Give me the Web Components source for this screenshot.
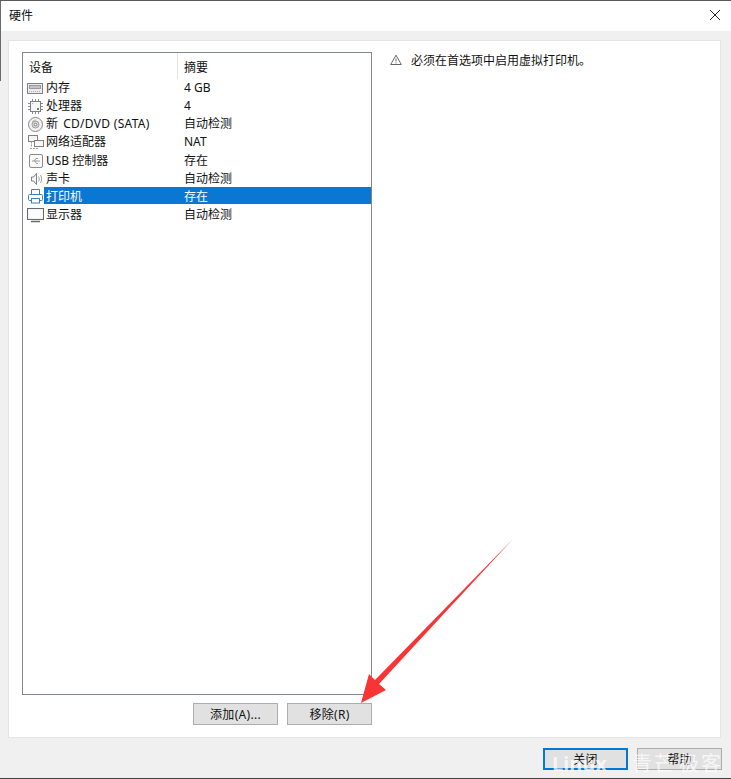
<!DOCTYPE html>
<html lang="zh">
<head>
<meta charset="utf-8">
<title>硬件</title>
<style>
  html, body { margin: 0; padding: 0; background: #f0f0f0; }
  body { font: 12px "Noto Sans", "Noto Sans CJK SC", sans-serif; color: #111; }
</style>
</head>
<body>
<hw-dialog title-text="硬件">
  <device-list slot="list">
    <device-row icon="memory" name="内存" summary="4 GB"></device-row>
    <device-row icon="cpu" name="处理器" summary="4"></device-row>
    <device-row icon="cd" name="新 <b>CD/DVD (SATA)</b>" summary="自动检测"></device-row>
    <device-row icon="net" name="网络适配器" summary="NAT"></device-row>
    <device-row icon="usb" name="USB 控制器" summary="存在"></device-row>
    <device-row icon="sound" name="声卡" summary="自动检测"></device-row>
    <device-row icon="printer" name="打印机" summary="存在" selected></device-row>
    <device-row icon="display" name="显示器" summary="自动检测"></device-row>
  </device-list>
  <win-button slot="list-actions">添加(A)...</win-button>
  <win-button slot="list-actions">移除(R)</win-button>
  <warn-note slot="detail">必须在首选项中启用虚拟打印机。</warn-note>
  <win-button slot="footer" primary>关闭</win-button>
  <win-button slot="footer">帮助</win-button>
</hw-dialog>

<script>
const ICONS = {
  memory: `<rect x="1.500" y="4.500" width="15" height="10" fill="#ececec" stroke="#808080"/><rect x="3.500" y="6.500" width="11" height="3" fill="#c4c4c4" stroke="#9a9a9a"/><path d="M3 12.500h12" stroke="#b0b0b0" stroke-dasharray="1 1"/>`,
  cpu: `<rect x="4.500" y="4.500" width="10" height="10" fill="#f6f6f6" stroke="#808080"/><path d="M6.500 2v2M9.500 2v2M12.500 2v2M6.500 15v2M9.500 15v2M12.500 15v2M2 6.500h2M2 9.500h2M2 12.500h2M15 6.500h2M15 9.500h2M15 12.500h2" stroke="#8c8c8c"/><rect x="11" y="11" width="2" height="2" fill="#777"/><rect x="6" y="6" width="1" height="1" fill="#aaa"/>`,
  cd: `<circle cx="9.500" cy="9.500" r="7" fill="#f2f2f2" stroke="#868686"/><path d="M6 7a4.500 4.500 0 0 1 4-2" stroke="#bbb" fill="none"/><circle cx="9.500" cy="9.500" r="3.500" fill="#d8d8d8" stroke="#a0a0a0"/><circle cx="9.500" cy="9.500" r="1.300" fill="#fff" stroke="#808080"/>`,
  net: `<rect x="2.500" y="2.500" width="9" height="6" fill="#f6f6f6" stroke="#808080"/><rect x="8.500" y="7.500" width="9" height="6" fill="#f6f6f6" stroke="#808080"/><path d="M5.500 8.500v5M4 15.500h9" stroke="#999" stroke-dasharray="2 1" fill="none"/>`,
  usb: `<rect x="3.500" y="2.500" width="13" height="13" rx="1.500" fill="#fafafa" stroke="#8c8c8c"/><path d="M6 9h8M8 9l2-2.500h2M9 9l1.500 2.500H12" stroke="#999" fill="none"/>`,
  sound: `<path d="M5.500 7h2l3-3.500v11L7.500 11h-2z" fill="#f4f4f4" stroke="#808080"/><path d="M12.500 6.500c1 1.500 1 3.500 0 5M14.500 5c1.500 2.500 1.500 5.500 0 8" stroke="#a0a0a0" fill="none"/>`,
  printer: `<path d="M5.500 6V1.500h8V6" fill="#fff" stroke="#3f80b5"/><rect x="2.500" y="6.500" width="14" height="6" rx="1" fill="#fff" stroke="#3f80b5"/><rect x="5.500" y="10.500" width="8" height="4.500" fill="#fff" stroke="#3f80b5"/>`,
  display: `<rect x="1.500" y="2.500" width="16" height="11" fill="#f2f2f2" stroke="#6a6a6a"/><rect x="3" y="4" width="13" height="8" fill="#fbfbfb"/><path d="M5 15.500h9" stroke="#6a6a6a" stroke-width="1.500"/>`
};

class HwDialog extends HTMLElement {
  connectedCallback() {
    this.attachShadow({ mode: "open" });
    this.shadowRoot.innerHTML = `
      <style>
        :host { display: block; position: relative; width: 731px; height: 779px; box-sizing: border-box; overflow: hidden;
          background: #f0f0f0; border-top: 1px solid #5a5a5a; border-bottom: 1px solid #444; }
        .titlebar { height: 30px; background: #fff; display: flex; align-items: center; justify-content: space-between; padding: 0 10px 0 9px; }
        .titlebar span { font-size: 12px; position: relative; top: -1px; }
        .titlebar svg { display: block; margin-top: -2px; }
        .panel { margin: 9px 10px 0 8px; height: 698px; box-sizing: border-box; background: #fff; border: 1px solid #e4e4e4;
          padding: 11px 13px 12px 13px; display: flex; gap: 18px; }
        .left { width: 350px; display: flex; flex-direction: column; gap: 8px; flex: none; }
        .listbox { height: 643px; box-sizing: border-box; border: 1px solid #828790; }
        .actions { display: flex; justify-content: flex-end; gap: 9px; }
        .footer { display: flex; justify-content: flex-end; gap: 9px; padding: 10px 9px 0 0; }
        .left-edge { position: absolute; left: 0; top: 0; width: 1px; height: 80px; background: #6a6a6a; }
        .arrow { position: absolute; left: 355px; top: 536px; }
        .mark { position: absolute; left: 552px; top: 750px; display: flex; align-items: baseline; color: rgba(255,255,255,.72);
          font-size: 20px; line-height: 26px; white-space: nowrap; }
        .mark b { width: 80px; }
        .mark i { font-style: normal; width: 47px; letter-spacing: 2px; }
      </style>
      <div class="left-edge"></div>
      <div class="titlebar">
        <span>${this.getAttribute("title-text")}</span>
        <svg width="12" height="12" viewBox="0 0 12 12"><path d="M1 1l10 10M11 1L1 11" stroke="#222" stroke-width="1" fill="none"/></svg>
      </div>
      <div class="panel">
        <div class="left">
          <div class="listbox"><slot name="list"></slot></div>
          <div class="actions"><slot name="list-actions"></slot></div>
        </div>
        <div><slot name="detail"></slot></div>
      </div>
      <div class="footer"><slot name="footer"></slot></div>
      <svg class="arrow" width="162" height="172" viewBox="0 0 162 172">
        <path d="M158 2 L24 147 L31 153 L6 166 L14 137 L20 143 Z" fill="#f93434"/>
      </svg>
      <div class="mark"><b>Linux</b><i>青芒</i><i>极客</i></div>
    `;
  }
}

class DeviceList extends HTMLElement {
  connectedCallback() {
    this.attachShadow({ mode: "open" });
    this.shadowRoot.innerHTML = `
      <style>
        :host { display: block; }
        .head { display: grid; grid-template-columns: 154px 1fr; height: 26px; }
        .head div { padding: 6px 0 0 6px; line-height: 18px; }
        .head div + div { border-left: 1px solid #e5e5e5; padding-left: 6px; }
        .rows { display: flex; flex-direction: column; }
      </style>
      <div class="head"><div>设备</div><div>摘要</div></div>
      <div class="rows"><slot></slot></div>
    `;
  }
}

class DeviceRow extends HTMLElement {
  connectedCallback() {
    this.attachShadow({ mode: "open" });
    const sel = this.hasAttribute("selected");
    this.shadowRoot.innerHTML = `
      <style>
        :host { display: grid; grid-template-columns: 155px 1fr; height: 18.14px; align-items: center; line-height: 18px; white-space: nowrap; }
        .name { display: flex; align-items: center; height: 100%; }
        svg { flex: none; margin-left: 3px; }
        .label { padding: 0 1px; height: 18px; }
        .label b { font-weight: 400; letter-spacing: .3px; margin-left: 2px; }
        .sum { padding-left: 6px; height: 18px; }
        ${sel ? `:host { position: relative; isolation: isolate; color: #fff; }
        :host::before { content: ""; position: absolute; z-index: -1; left: 21px; right: 0; top: -1px; height: 17px; background: #0a78d2; }` : ""}
      </style>
      <div class="name">
        <svg width="19" height="18" viewBox="0 0 19 18">${ICONS[this.getAttribute("icon")]}</svg>
        <span class="label">${this.getAttribute("name")}</span>
      </div>
      <div class="sum">${this.getAttribute("summary")}</div>
    `;
  }
}

class WinButton extends HTMLElement {
  connectedCallback() {
    this.attachShadow({ mode: "open" });
    this.shadowRoot.innerHTML = `
      <style>
        :host { display: inline-flex; width: 85px; height: 22px; box-sizing: border-box; align-items: center; justify-content: center;
          background: #e1e1e1; border: 1px solid #adadad; letter-spacing: .3px; }
        :host([primary]) { border: 2px solid #0078d7; }
      </style>
      <slot></slot>
    `;
  }
}

class WarnNote extends HTMLElement {
  connectedCallback() {
    this.attachShadow({ mode: "open" });
    this.shadowRoot.innerHTML = `
      <style>
        :host { display: flex; align-items: center; gap: 9px; height: 16px; }
        svg { display: block; }
      </style>
      <svg width="12" height="12" viewBox="0 0 12 12">
        <path d="M6 1.200L11.300 10.500H.700Z" fill="#fff" stroke="#666"/><path d="M6 4.500v3M6 8.500v1" stroke="#666"/>
      </svg>
      <span><slot></slot></span>
    `;
  }
}

customElements.define("hw-dialog", HwDialog);
customElements.define("device-list", DeviceList);
customElements.define("device-row", DeviceRow);
customElements.define("win-button", WinButton);
customElements.define("warn-note", WarnNote);
</script>
</body>
</html>
